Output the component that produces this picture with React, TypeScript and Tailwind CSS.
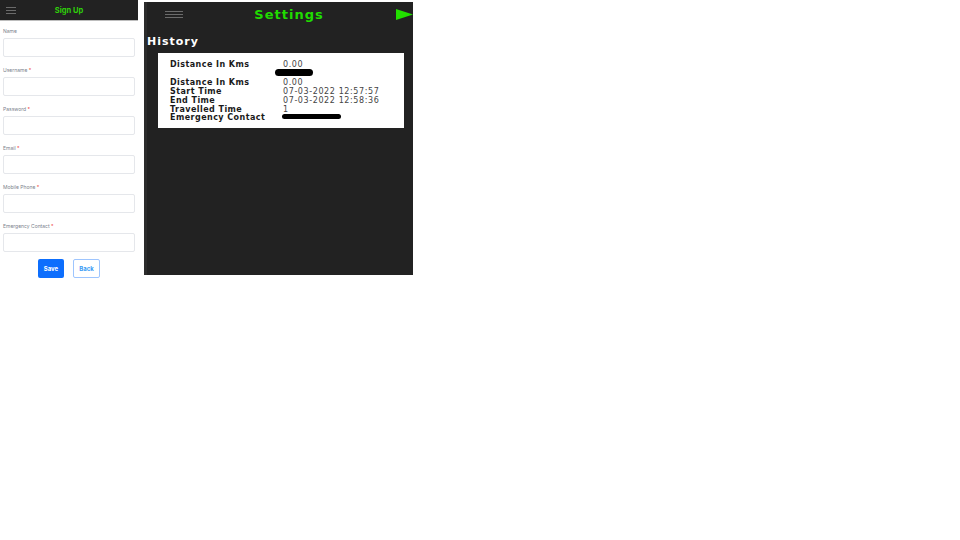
import React from 'react';

const fields = [
    { label: 'Name', required: false },
    { label: 'Username', required: true },
    { label: 'Password', required: true },
    { label: 'Email', required: true },
    { label: 'Mobile Phone', required: true },
    { label: 'Emergency Contact', required: true },
];

const Burger = ({ className }: { className: string }) => (
    <div className={`flex flex-col justify-between ${className}`}>
        <div className="h-px bg-[#6b6b6b]" />
        <div className="h-px bg-[#6b6b6b]" />
        <div className="h-px bg-[#6b6b6b]" />
    </div>
);

const SignUp = () => (
    <div className="w-[138px] shrink-0 font-['Inter',sans-serif]">
        <div className="h-[21px] bg-[#222222] border-b border-[#bdbdbd] flex items-center relative">
            <Burger className="w-[10px] h-[7px] ml-[6px]" />
            <span className="absolute inset-x-0 top-[5px] text-center text-[7.5px] font-bold text-[#2fd10a]">Sign Up</span>
        </div>
        <div className="px-[3px] pt-[5px] flex flex-col gap-[8px]">
            {fields.map(field => (
                <div key={field.label}>
                    <div className="h-[12px] leading-[11px] text-[5px] text-[#7b828c]">
                        {field.label} {field.required && <span className="text-[#ef4444]">*</span>}
                    </div>
                    <div className="h-[19px] bg-white border border-[#e5e7eb] rounded-[2px]" />
                </div>
            ))}
        </div>
        <div className="flex justify-center gap-[9px] mt-[7px]">
            <button className="w-[26px] h-[19px] bg-[#0d6efd] rounded-[2px] text-white text-[6px] font-bold">Save</button>
            <button className="w-[27px] h-[19px] bg-white border border-[#9ec5fe] rounded-[2px] text-[#3b9bf5] text-[6px] font-bold">Back</button>
        </div>
    </div>
);

const Row = ({ label, value, height = 'h-[9px]' }: { label: string; value: React.ReactNode; height?: string }) => (
    <div className={`flex items-center ${height}`}>
        <span className="w-[113px] font-bold text-[#1a1a1a] whitespace-nowrap tracking-[0.45px]">{label}</span>
        <span className="text-[#444444] whitespace-nowrap tracking-[0.6px]">{value}</span>
    </div>
);

const Settings = () => (
    <div className="w-[269px] h-[273px] mt-[2px] ml-[6px] shrink-0 bg-[#222222] border-l-[3px] border-[#2c2c2c] font-['DejaVu_Sans',sans-serif]">
        <div className="h-[25px] flex items-center relative">
            <Burger className="w-[18px] h-[7px] ml-[18px]" />
            <span className="absolute inset-x-0 pl-[18px] text-center text-[13px] font-bold text-[#20dc00] tracking-[1px]">Settings</span>
            <svg className="absolute right-0 top-[7px]" width="17" height="11" viewBox="0 0 17 11">
                <polygon points="0,0 17,5.5 0,11" fill="#22e000" />
            </svg>
        </div>
        <h2 className="mt-[8px] h-[14px] leading-[14px] text-[11px] font-bold text-white tracking-[1px]">History</h2>
        <div className="ml-[11px] mt-[4px] w-[246px] h-[75px] bg-white pl-[12px] pt-[7px] text-[8px]">
            <Row label="Distance In Kms" value="0.00" />
            <div className="h-[9px] flex items-start">
                <div className="ml-[105px] w-[38px] h-[7px] bg-black rounded-full" />
            </div>
            <Row label="Distance In Kms" value="0.00" />
            <Row label="Start Time" value="07-03-2022 12:57:57" />
            <Row label="End Time" value="07-03-2022 12:58:36" />
            <Row label="Travelled Time" value="1" />
            <Row
                label="Emergency Contact"
                height="h-[8px]"
                value={<span className="block ml-[-1px] mt-[-3px] w-[59px] h-[5px] bg-black rounded-full" />}
            />
        </div>
    </div>
);

export default function App() {
    return (
        <div className="w-[960px] h-[540px] bg-white flex items-start overflow-hidden">
            <SignUp />
            <Settings />
        </div>
    );
}
